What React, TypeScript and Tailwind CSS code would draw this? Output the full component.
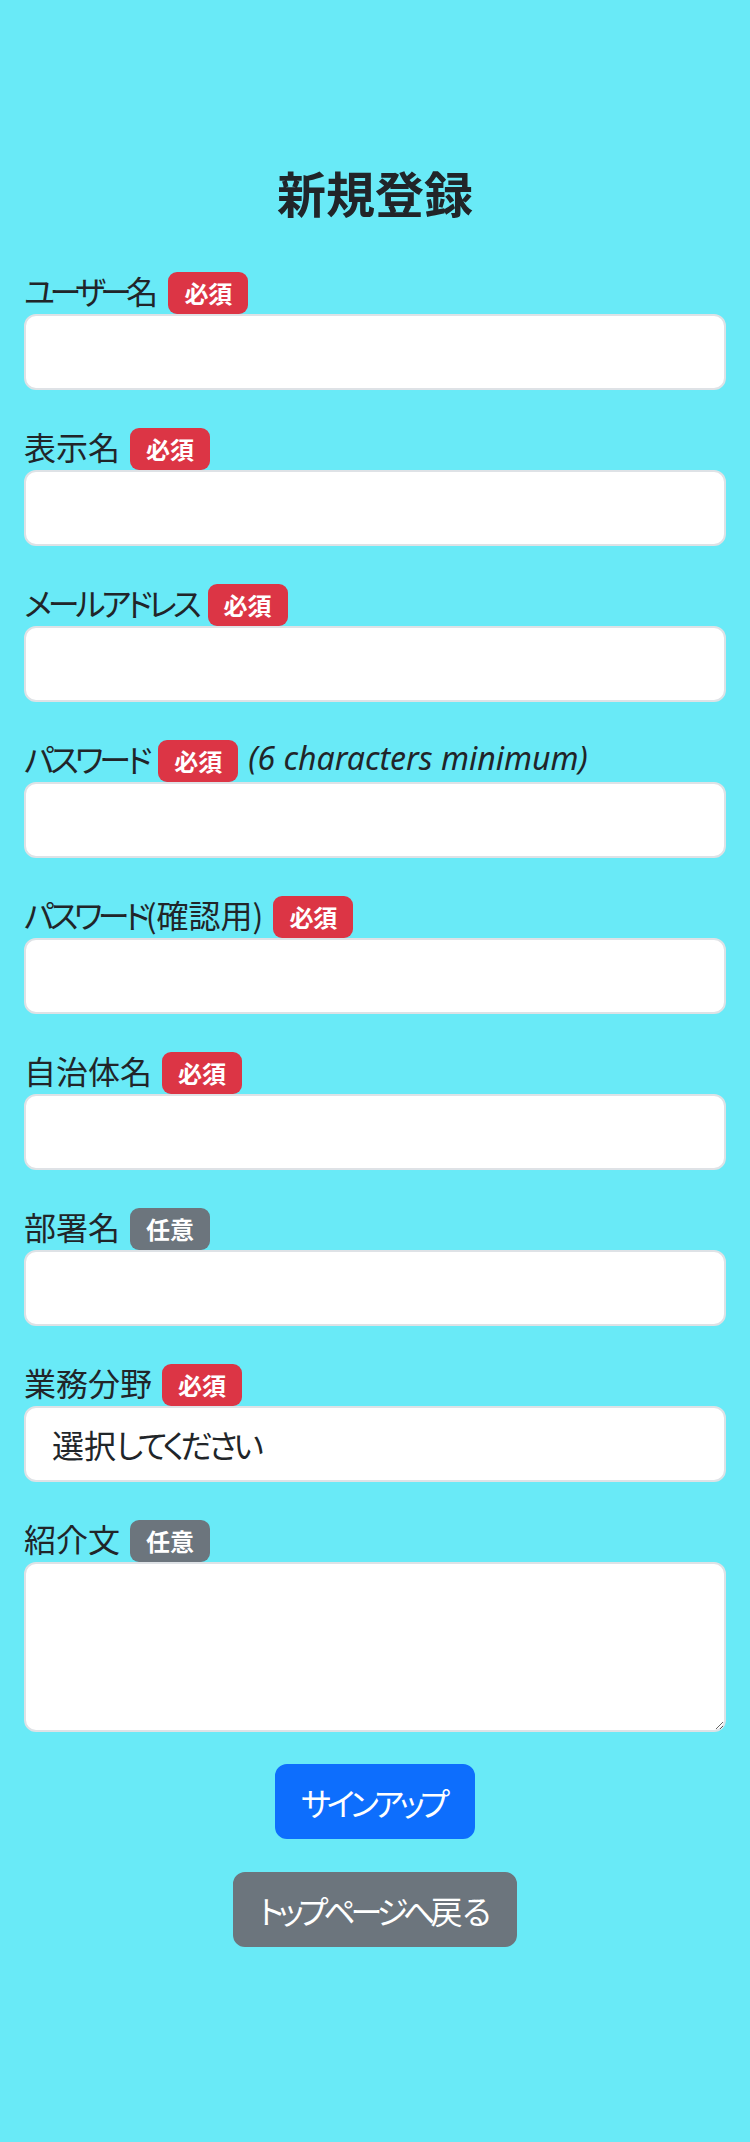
import React from "react";

type Field = {
  label: React.ReactNode;
  key: string;
  required: boolean;
  note?: string;
  kind?: "input" | "select" | "textarea";
  type?: string;
};

function K({ t, children }: { t: "a" | "b" | "c" | "d" | "e"; children: React.ReactNode }) {
  const cls =
    t === "a"
      ? "tracking-[-5.5px]"
      : t === "b"
      ? "tracking-[-4px]"
      : t === "c"
      ? "tracking-[-4.5px]"
      : t === "d"
      ? "tracking-[-4px]"
      : "tracking-[-5px]";
  return <span className={cls}>{children}</span>;
}

const fields: Field[] = [
  { key: "username", label: <><K t="a">ユーザー</K>名</>, required: true },
  { key: "display", label: "表示名", required: true },
  { key: "email", label: <K t="b">メールアドレス</K>, required: true, type: "email" },
  { key: "password", label: <K t="b">パスワード</K>, required: true, note: "(6 characters minimum)", type: "password" },
  { key: "confirm", label: <><K t="c">パスワード</K>(確認用)</>, required: true, type: "password" },
  { key: "city", label: "自治体名", required: true },
  { key: "dept", label: "部署名", required: false },
  { key: "field", label: "業務分野", required: true, kind: "select" },
  { key: "intro", label: "紹介文", required: false, kind: "textarea" },
];

function Badge({ required }: { required: boolean }) {
  return (
    <span
      className={
        "ml-[10px] flex h-[42px] items-center rounded-[9px] px-[16px] text-[24px] font-bold leading-none text-white " +
        (required ? "bg-[#dc3545]" : "bg-[#6c757d]")
      }
    >
      {required ? "必須" : "任意"}
    </span>
  );
}

export default function App() {
  return (
    <div className="min-h-[2142px] w-full bg-[#69eaf7] font-['Noto_Sans_CJK_JP','Noto_Sans',sans-serif] text-[#212529] [font-feature-settings:'palt']">
      <div className="px-[24px] pt-[162px]">
        <h2 className="mb-[45px] text-center text-[49px] font-bold leading-[59px] [font-feature-settings:normal]">新規登録</h2>
        <form>
          {fields.map((f) => (
            <div key={f.key} className="mb-[32px]">
              <div className="flex h-[48px] items-end">
                <span className="whitespace-nowrap text-[32px] leading-[48px]">{f.label}</span>
                <Badge required={f.required} />
                {f.note && (
                  <span className="ml-[10px] font-['Noto_Sans',sans-serif] text-[32px] italic leading-[48px]">
                    {f.note}
                  </span>
                )}
              </div>
              {f.kind === "select" ? (
                <div className="flex h-[76px] w-full items-center rounded-[12px] border-2 border-[#dee2e6] bg-white px-[26px] text-[32px] leading-[48px]">
                  選択<K t="d">してください</K>
                </div>
              ) : f.kind === "textarea" ? (
                <textarea className="block h-[170px] w-full resize-y rounded-[12px] border-2 border-[#dee2e6] bg-white px-[24px] py-[12px] text-[32px] outline-none" />
              ) : (
                <input
                  type={f.type ?? "text"}
                  className="block h-[76px] w-full rounded-[12px] border-2 border-[#dee2e6] bg-white px-[24px] text-[32px] outline-none"
                />
              )}
            </div>
          ))}
          <div className="flex flex-col items-center gap-[33px]">
            <button
              type="button"
              className="h-[75px] rounded-[12px] border-2 border-[#0d6efd] bg-[#0d6efd] pl-[24px] pr-[28px] text-[32px] leading-[48px] text-white"
            >
              <K t="c">サインアップ</K>
            </button>
            <button
              type="button"
              className="h-[75px] rounded-[12px] border-2 border-[#6c757d] bg-[#6c757d] px-[24px] text-[32px] leading-[48px] text-white"
            >
              <K t="e">トップページへ</K>戻る
            </button>
          </div>
        </form>
      </div>
    </div>
  );
}
